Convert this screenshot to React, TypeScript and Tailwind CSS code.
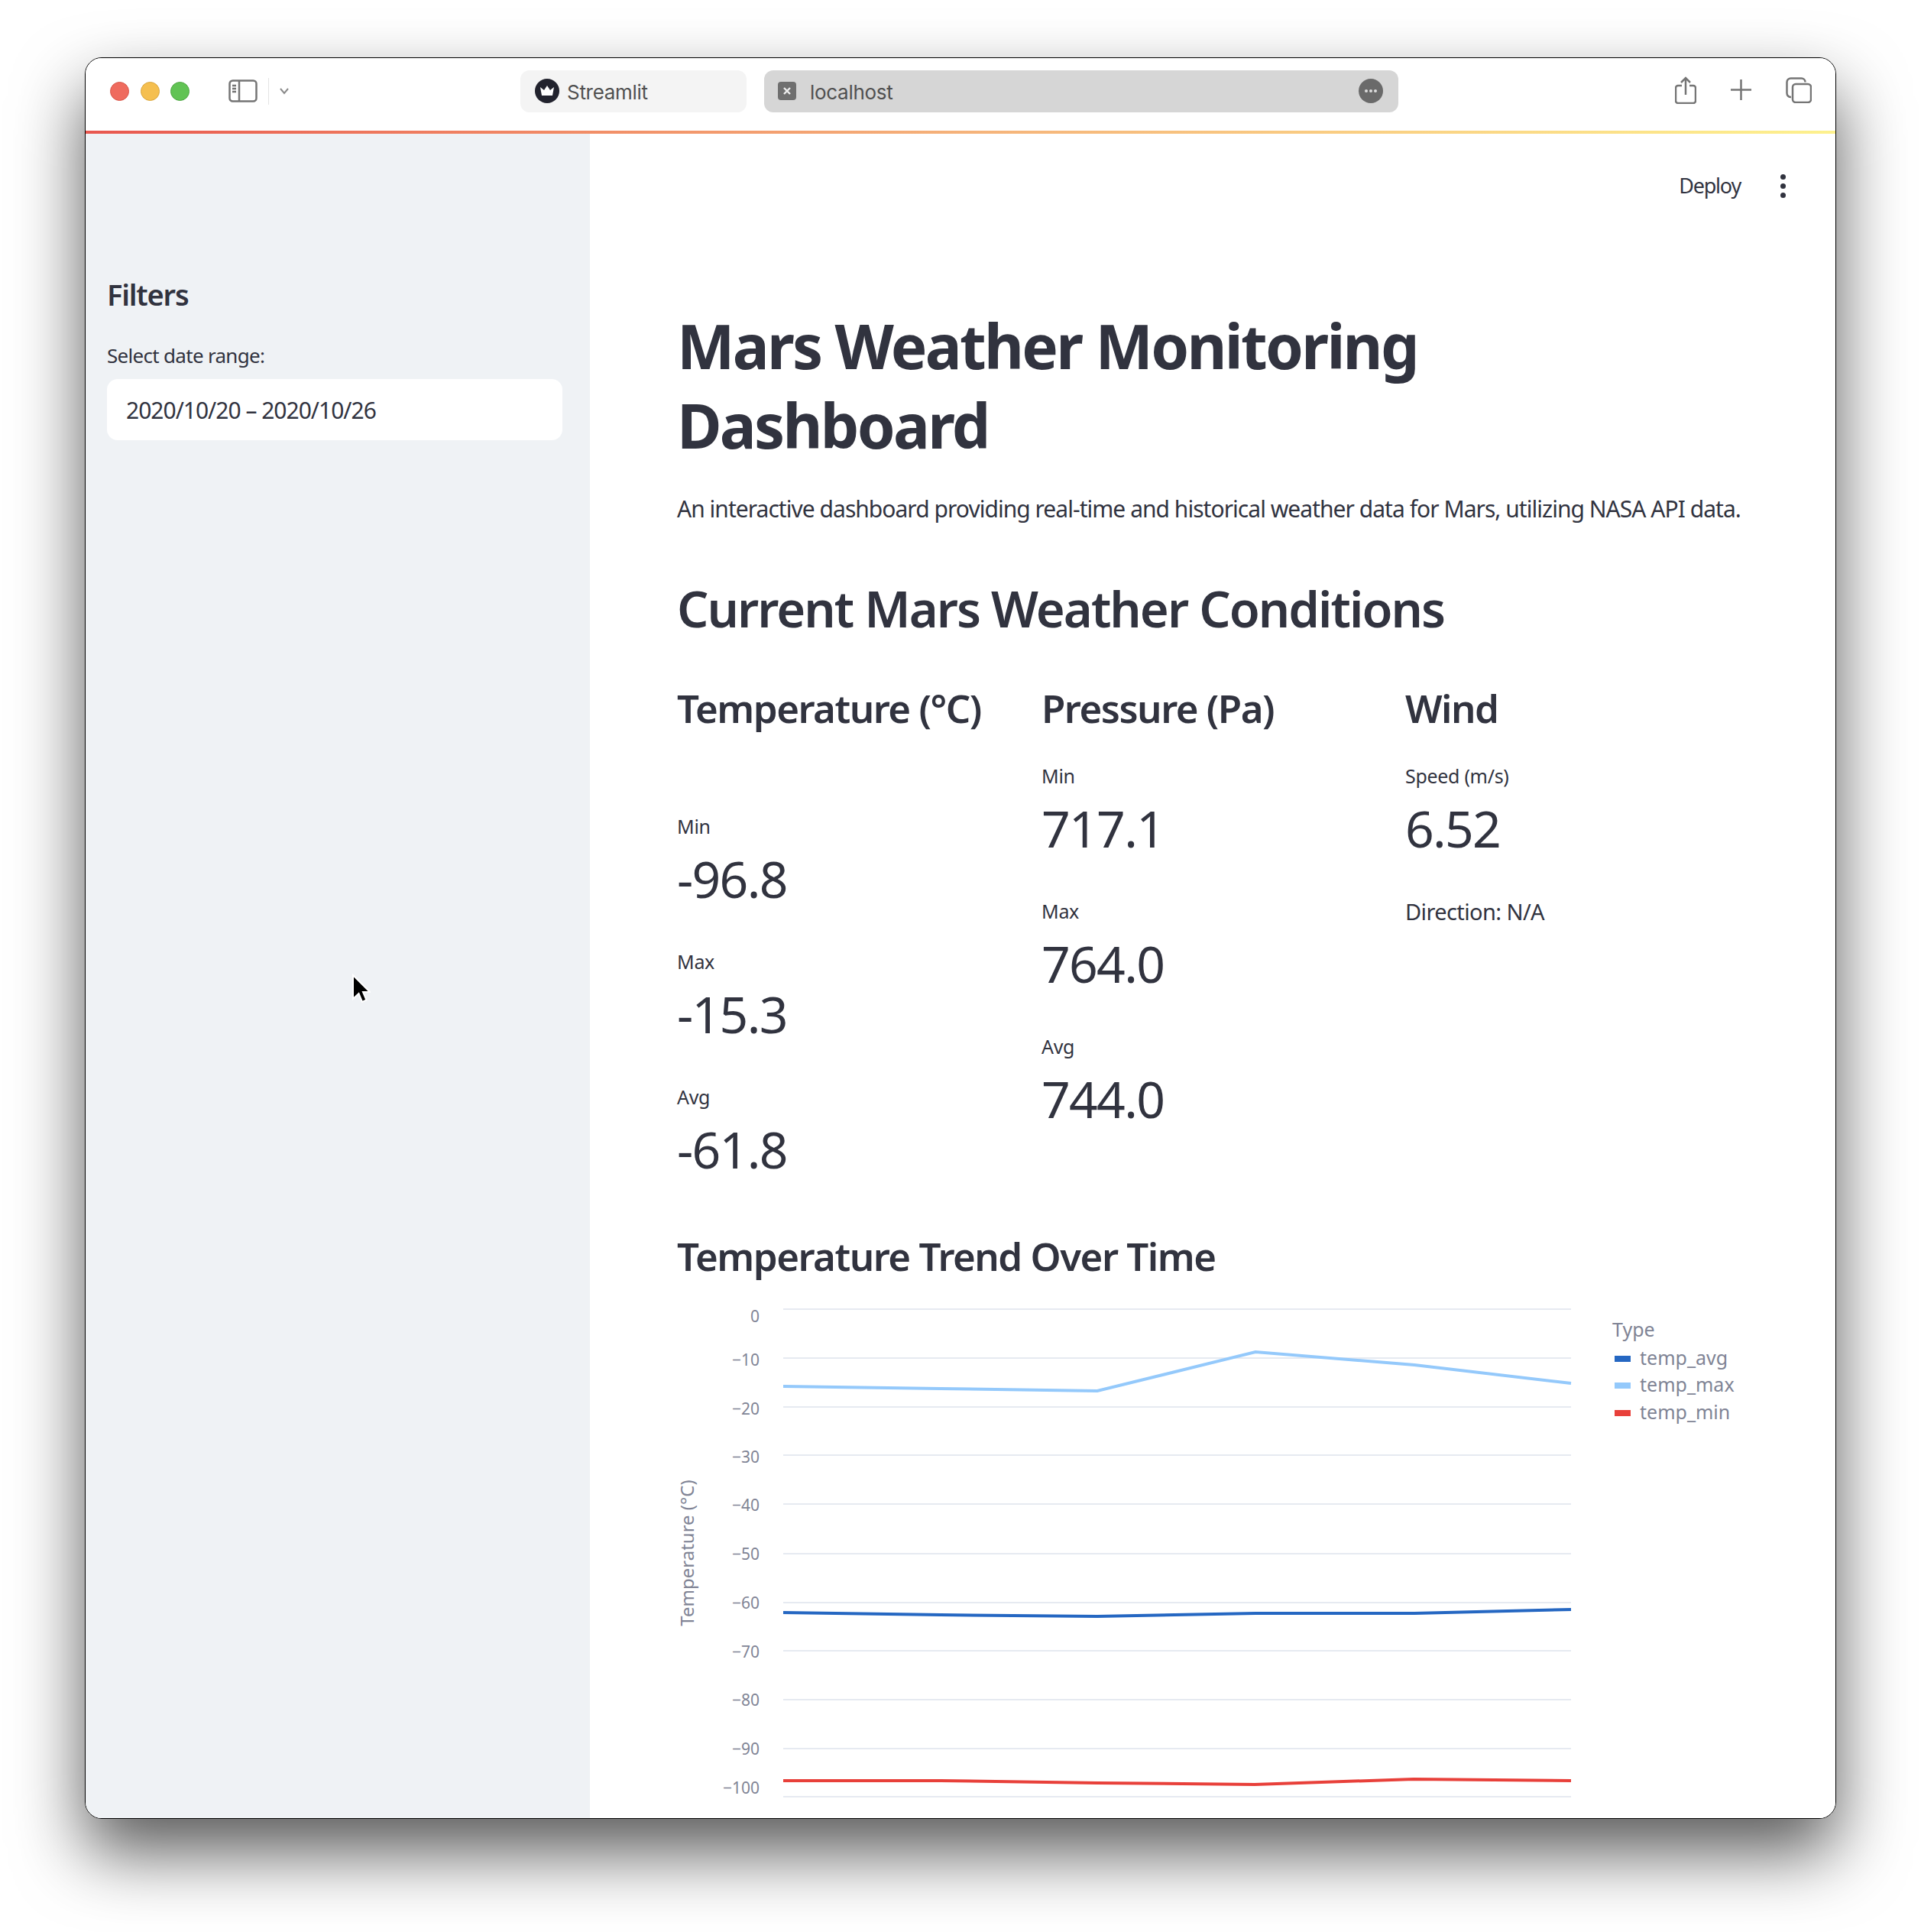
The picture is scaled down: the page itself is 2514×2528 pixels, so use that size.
const font = "font-['Noto_Sans','Liberation_Sans',sans-serif]";

const gridLines = [
  { y: 1713, label: "0", labelY: 1722 },
  { y: 1777, label: "−10", labelY: 1779 },
  { y: 1841, label: "−20", labelY: 1843 },
  { y: 1904, label: "−30", labelY: 1906 },
  { y: 1968, label: "−40", labelY: 1969 },
  { y: 2033, label: "−50", labelY: 2033 },
  { y: 2097, label: "−60", labelY: 2097 },
  { y: 2160, label: "−70", labelY: 2161 },
  { y: 2224, label: "−80", labelY: 2224 },
  { y: 2288, label: "−90", labelY: 2288 },
  { y: 2351, label: "−100", labelY: 2339 },
];

const series = [
  { name: "temp_max", color: "#94c9fb", pts: "1025,1814 1231,1817 1436,1820 1643,1769 1851,1786 2056,1810" },
  { name: "temp_avg", color: "#2567c2", pts: "1025,2110 1231,2113 1436,2115 1643,2111 1851,2111 2056,2106" },
  { name: "temp_min", color: "#e8403a", pts: "1025,2330 1231,2330 1436,2333 1642,2335 1850,2328 2056,2330" },
];

const legend = [
  { name: "temp_avg", color: "#2567c2", y: 1778 },
  { name: "temp_max", color: "#94c9fb", y: 1813 },
  { name: "temp_min", color: "#e8403a", y: 1849 },
];

function Chart() {
  return (
    <svg width="1530" height="720" viewBox="872 1660 1530 720" className="block">
      {gridLines.map((g) => (
        <g key={g.label}>
          <line x1="1025" x2="2056" y1={g.y} y2={g.y} stroke="#e6eaf1" strokeWidth="2" />
          <text x="994" y={g.labelY + 8} textAnchor="end" fontSize="21" fill="#808495" fontFamily="Noto Sans">{g.label}</text>
        </g>
      ))}
      <text transform="translate(908 2032) rotate(-90)" textAnchor="middle" fontSize="24" fill="#808495" fontFamily="Noto Sans">Temperature (°C)</text>
      {series.map((s) => (
        <polyline key={s.name} points={s.pts} fill="none" stroke={s.color} strokeWidth="4" />
      ))}
      <text x="2110" y="1749" fontSize="25" fill="#808495" fontFamily="Noto Sans">Type</text>
      {legend.map((l) => (
        <g key={l.name}>
          <rect x="2113" y={l.y - 4} width="21" height="8" fill={l.color} />
          <text x="2146" y={l.y + 8} fontSize="25" fill="#808495" fontFamily="Noto Sans">{l.name}</text>
        </g>
      ))}
    </svg>
  );
}

function Metric({ label, value, className = "" }: { label: string; value: string; className?: string }) {
  return (
    <div className={`h-[177px] ${className}`}>
      <div className="text-[25px] leading-[36px] tracking-[-0.3px]">{label}</div>
      <div className="mt-[8px] text-[66px] leading-[84px] tracking-[-1.7px]">{value}</div>
    </div>
  );
}

function TitleBar() {
  return (
    <div className="relative flex h-[95px] items-center bg-white pb-[9px]">
      <div className="ml-[32px] flex gap-[14.5px]">
        <span className="h-[25px] w-[25px] rounded-full border border-[#d8574b] bg-[#ef6b5e]" />
        <span className="h-[25px] w-[25px] rounded-full border border-[#d9a63e] bg-[#f5bf4f]" />
        <span className="h-[25px] w-[25px] rounded-full border border-[#4fa644] bg-[#61c354]" />
      </div>
      <svg width="38" height="30" viewBox="0 0 38 30" className="ml-[51px]" fill="none" stroke="#757575" strokeWidth="2.5">
        <rect x="1.5" y="1.5" width="35" height="27" rx="4" />
        <line x1="14" y1="2" x2="14" y2="28" />
        <line x1="5" y1="8" x2="10" y2="8" />
        <line x1="5" y1="12" x2="10" y2="12" />
        <line x1="5" y1="16" x2="10" y2="16" />
      </svg>
      <span className="ml-[14px] h-[35px] w-px bg-[#e4e4e4]" />
      <svg width="14" height="10" viewBox="0 0 14 10" className="ml-[13px]" fill="none" stroke="#8a8a8a" strokeWidth="2">
        <path d="M2 2l5 6 5-6" />
      </svg>
      <div className="ml-[302px] flex h-[55px] w-[296px] items-center rounded-[12px] bg-[#f4f4f4]">
        <svg width="32" height="32" viewBox="0 0 32 32" className="ml-[19px]">
          <circle cx="16" cy="16" r="16" fill="#22232e" />
          <path d="M7 11l5 4 4-6 4 6 5-4-2 11H9z" fill="#fff" />
        </svg>
        <span className="ml-[10px] pt-[2px] font-['Inter'] text-[26px] tracking-[-0.3px] text-[#505050]">Streamlit</span>
      </div>
      <div className="ml-[23px] flex h-[55px] w-[830px] items-center rounded-[12px] bg-[#d6d6d6]">
        <span className="ml-[18px] flex h-[24px] w-[24px] items-center justify-center rounded-[4px] bg-[#6f6f6f]">
          <svg width="12" height="12" viewBox="0 0 12 12" stroke="#eee" strokeWidth="2.4"><path d="M2 2l8 8M10 2l-8 8" /></svg>
        </span>
        <span className="ml-[18px] pt-[2px] font-['Inter'] text-[26px] tracking-[-0.3px] text-[#505050]">localhost</span>
        <span className="ml-auto mr-[20px] flex h-[32px] w-[32px] items-center justify-center gap-[2px] rounded-full bg-[#6a6a6a]">
          <i className="h-[4px] w-[4px] rounded-full bg-[#ddd]" />
          <i className="h-[4px] w-[4px] rounded-full bg-[#ddd]" />
          <i className="h-[4px] w-[4px] rounded-full bg-[#ddd]" />
        </span>
      </div>
      <div className="ml-auto mr-[31px] flex items-center gap-[45px] pb-[3px]">
        <svg width="28" height="36" viewBox="0 0 28 36" fill="none" stroke="#757575" strokeWidth="2.5">
          <path d="M9 12H4a3 3 0 0 0-3 3v17a3 3 0 0 0 3 3h20a3 3 0 0 0 3-3V15a3 3 0 0 0-3-3h-5" />
          <path d="M14 24V2M8 8l6-6 6 6" />
        </svg>
        <svg width="27" height="27" viewBox="0 0 27 27" stroke="#757575" strokeWidth="2.5"><path d="M13.5 0v27M0 13.5h27" /></svg>
        <svg width="34" height="34" viewBox="0 0 34 34" fill="none" stroke="#757575" strokeWidth="2.5">
          <path d="M7 26a5 5 0 0 1-5.5-5V6.5a5 5 0 0 1 5-5h14a5 5 0 0 1 5 5" />
          <rect x="9" y="9" width="24" height="24" rx="4" />
        </svg>
      </div>
    </div>
  );
}

export default function App() {
  return (
    <div className={`h-[2528px] w-[2514px] overflow-hidden bg-white pl-[111px] pt-[75px] text-[#31333f] ${font}`}>
      <div className="flex h-[2305px] w-[2292px] flex-col overflow-hidden rounded-[22px] border border-black shadow-[0_44px_90px_rgba(0,0,0,0.65)]">
        <TitleBar />
        <div className="h-[4px] shrink-0 bg-gradient-to-r from-[#e8574f] via-[#f5b27a] to-[#fdf18e]" />
        <div className="flex min-h-0 flex-1">
          <aside className="relative w-[660px] shrink-0 bg-[#eff2f5] pl-[28px] pr-[36px] pt-[183px]">
            <h2 className="text-[38px] font-semibold leading-[54px] tracking-[-1.2px]">Filters</h2>
            <label className="mt-[35px] block text-[26px] leading-[36px] tracking-[-0.7px]">Select date range:</label>
            <div className="mt-[13px] flex h-[80px] items-center rounded-[14px] bg-white pl-[25px] text-[30px] tracking-[-1px]">
              2020/10/20 – 2020/10/26
            </div>
            <svg width="26" height="40" viewBox="0 0 26 40" className="absolute left-[347px] top-[1099px]">
              <path d="M3 2v31l7.5-7 4.5 11 5.5-2.5-4.5-10.5H25z" fill="#000" stroke="#fff" strokeWidth="2" />
            </svg>
          </aside>
          <main className="min-w-0 flex-1 bg-white pl-[114px]">
            <div className="flex h-[136px] items-center justify-end pr-[65px]">
              <span className="text-[27px] tracking-[-1.2px]">Deploy</span>
              <span className="ml-[52px] flex flex-col gap-[5px]">
                <i className="h-[7px] w-[7px] rounded-full bg-[#31333f]" />
                <i className="h-[7px] w-[7px] rounded-full bg-[#31333f]" />
                <i className="h-[7px] w-[7px] rounded-full bg-[#31333f]" />
              </span>
            </div>
            <h1 className="mt-[89px] w-[1300px] text-[80px] font-bold leading-[104px] tracking-[-2.7px]">
              Mars Weather Monitoring Dashboard
            </h1>
            <p className="mt-[36px] whitespace-nowrap text-[30px] leading-[44px] tracking-[-0.97px]">
              An interactive dashboard providing real-time and historical weather data for Mars, utilizing NASA API data.
            </p>
            <h2 className="mt-[63px] text-[65px] font-semibold leading-[90px] tracking-[-1.95px]">Current Mars Weather Conditions</h2>
            <div className="mt-[45px] grid grid-cols-[477px_476px_1fr]">
              <div>
                <h3 className="text-[51px] font-semibold leading-[80px] tracking-[-1.5px]">Temperature (°C)</h3>
                <Metric className="mt-[97px]" label="Min" value="-96.8" />
                <Metric label="Max" value="-15.3" />
                <Metric label="Avg" value="-61.8" />
              </div>
              <div>
                <h3 className="text-[51px] font-semibold leading-[80px] tracking-[-1.5px]">Pressure (Pa)</h3>
                <Metric className="mt-[31px]" label="Min" value="717.1" />
                <Metric label="Max" value="764.0" />
                <Metric label="Avg" value="744.0" />
              </div>
              <div>
                <h3 className="text-[51px] font-semibold leading-[80px] tracking-[-1.5px]">Wind</h3>
                <Metric className="mt-[31px]" label="Speed (m/s)" value="6.52" />
                <div className="-mt-[3px] text-[29px] leading-[44px] tracking-[-0.6px]">Direction: N/A</div>
              </div>
            </div>
            <h3 className="mt-[33px] text-[51px] font-semibold leading-[33px] tracking-[-1.5px]">Temperature Trend Over Time</h3>
            <div className="-ml-[14px]">
              <Chart />
            </div>
          </main>
        </div>
      </div>
    </div>
  );
}
